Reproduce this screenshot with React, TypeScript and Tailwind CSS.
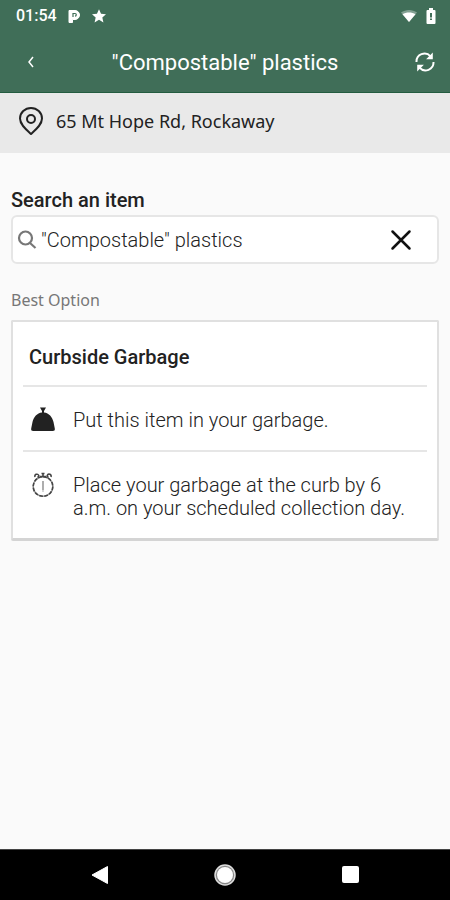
import React, { useState } from "react";

const steps = [
  { icon: "bag", text: "Put this item in your garbage." },
  {
    icon: "clock",
    text: "Place your garbage at the curb by 6 a.m. on your scheduled collection day.",
  },
];

function StatusBar() {
  return (
    <div className="flex h-8 items-center justify-between pl-4 pr-[13px] text-white">
      <div className="flex items-center">
        <span className="w-[52px] text-base font-medium">01:54</span>
        <svg className="h-4 w-3" viewBox="0 0 12 16">
          <path
            d="M1 2.500H7A4.500 4.500 0 0 1 7 11.500H4.500V14.500H1z"
            fill="currentColor"
            stroke="currentColor"
            strokeLinejoin="round"
          />
          <path d="M5 9V5.500h2a1.300 1.300 0 0 1 0 2.600" fill="none" stroke="#406e58" strokeWidth="1.200" />
        </svg>
        <svg className="ml-3 h-[14px] w-[14px]" viewBox="0 0 24 24" fill="currentColor">
          <path d="M12 .5l3.500 7.800 8.500.8-6.300 5.500 1.900 8.400L12 18.600l-7.600 4.400 1.900-8.400L0 9.100l8.500-.8z" />
        </svg>
      </div>
      <div className="flex items-center gap-2">
        <svg className="h-4 w-4" viewBox="0 0 16 16" fill="currentColor">
          <path d="M0 4.500C4.500 1 11.500 1 16 4.500L8 14z" opacity="0.35" />
          <path d="M1.500 6.200C5 3.800 11 3.800 14.500 6.200L8 14z" />
        </svg>
        <svg className="h-4 w-3" viewBox="0 0 12 16">
          <path
            d="M4 0h4v2h1.500a1 1 0 0 1 1 1v12a1 1 0 0 1-1 1h-7a1 1 0 0 1-1-1V3a1 1 0 0 1 1-1H4z"
            fill="currentColor"
          />
          <path d="M5 5h2v4.500H5zM5 10.500h2V12H5z" fill="#406e58" />
        </svg>
      </div>
    </div>
  );
}

function RefreshIcon() {
  return (
    <svg className="h-5 w-5" viewBox="0 0 20 20" fill="none">
      <path
        d="M1.500 10A8 8 0 0 1 15.500 4.300M18.500 10A8 8 0 0 1 4.500 15.700"
        stroke="currentColor"
        strokeWidth="2"
      />
      <path d="M17.800 0.500V7.200H11.100zM2.200 19.500V12.800H8.900z" fill="currentColor" />
    </svg>
  );
}

function BagIcon() {
  return (
    <svg className="h-7 w-7" viewBox="0 0 28 28" fill="#222">
      <path d="M11 1.500h6l-2 3.500v1.500c5 .5 8.300 4.500 9.500 9.500l1.300 6.500c.3 1.800-.5 2.500-2 2.500H4.200c-1.500 0-2.300-.7-2-2.500L3.500 16C4.700 11 8 7 13 6.500V5z" />
    </svg>
  );
}

function ClockIcon() {
  return (
    <svg className="h-7 w-7" viewBox="0 0 28 28" fill="none" stroke="#444">
      <circle cx="14" cy="15.500" r="9.800" stroke="#999" strokeWidth="1.400" />
      <circle cx="14" cy="15.500" r="9.800" strokeWidth="1.600" strokeDasharray="3.700 1.430" />
      <path d="M14 10v9" stroke="#777" strokeWidth="1.200" />
      <path d="M14 19v2" stroke="#bbb" strokeWidth="1.200" />
      <path
        d="M6 6a2 2 0 1 1 3.800-1.500c0 1-.5 1.500-1.300 2M22 6a2 2 0 1 0-3.800-1.500c0 1 .5 1.500 1.300 2M12.500 2.500h3M14 2.500v3M11 5.500h6"
        strokeWidth="1.600"
      />
    </svg>
  );
}

function NavBar() {
  return (
    <nav className="flex h-[51px] items-center justify-between border-t border-[#444] bg-black px-[88px] pb-px text-white">
      <button aria-label="Back" className="flex w-6 justify-center">
        <svg className="h-5 w-5" viewBox="0 0 20 20" fill="currentColor">
          <path d="M17.500 1.500v17L2 10z" stroke="currentColor" strokeLinejoin="round" />
        </svg>
      </button>
      <button aria-label="Home" className="flex w-6 justify-center">
        <svg className="h-[22px] w-[22px]" viewBox="0 0 22 22">
          <circle cx="11" cy="11" r="10" fill="#888" stroke="#ddd" strokeWidth="1.500" />
          <circle cx="11" cy="11" r="8" fill="#fff" />
        </svg>
      </button>
      <button aria-label="Recent apps" className="flex w-6 justify-center">
        <span className="h-[17px] w-[17px] rounded-xs bg-white" />
      </button>
    </nav>
  );
}

export default function App() {
  const [query, setQuery] = useState('"Compostable" plastics');

  return (
    <div className="flex min-h-screen flex-col bg-[#fafafa] font-[Roboto,sans-serif] text-[#222]">
      <header className="border-b border-[#235c40] bg-[#406e58] text-white">
        <StatusBar />
        <div className="flex h-[60px] items-center px-[15px]">
          <button aria-label="Go back" className="flex w-8 justify-center">
            <svg className="h-3 w-2" viewBox="0 0 8 12" fill="none">
              <path d="M6 1L2 6l4 5" stroke="currentColor" strokeWidth="1.500" />
            </svg>
          </button>
          <h1 className="flex-1 text-center text-[22px]">"Compostable" plastics</h1>
          <button aria-label="Refresh" className="flex w-8 justify-end">
            <RefreshIcon />
          </button>
        </div>
      </header>

      <div className="flex h-[60px] items-center gap-3 bg-[#e9e9e9] pb-1 pl-[18px] font-['Noto_Sans',sans-serif] text-lg">
        <svg className="h-7 w-[26px]" viewBox="0 0 26 28" fill="none" stroke="#222" strokeWidth="2">
          <path d="M13 27C8 22.500 2 17.500 2 11.500a11 10.500 0 0 1 22 0C24 17.500 18 22.500 13 27z" />
          <circle cx="13" cy="12" r="4" />
        </svg>
        <span>65 Mt Hope Rd, Rockaway</span>
      </div>

      <main className="flex-1 px-[11px] pt-[35px]">
        <label htmlFor="item" className="block text-xl font-medium leading-6">
          Search an item
        </label>
        <div className="mt-[3px] flex h-[49px] items-center rounded-md border-2 border-[#e6e6e6] bg-white pl-1 pr-6">
          <svg className="h-5 w-5" viewBox="0 0 20 20" fill="none" stroke="#777" strokeWidth="2.200">
            <circle cx="8.500" cy="8" r="6.500" />
            <path d="M13 13l5.500 5" />
          </svg>
          <input
            id="item"
            type="text"
            value={query}
            onChange={(e) => setQuery(e.target.value)}
            className="ml-1 min-w-0 flex-1 text-xl font-light outline-none"
          />
          <button aria-label="Clear search" onClick={() => setQuery("")}>
            <svg className="h-6 w-6" viewBox="0 0 24 24" fill="none" stroke="#111" strokeWidth="2.500" strokeLinecap="round">
              <path d="M3.500 3.500l17 17M20.500 3.500l-17 17" />
            </svg>
          </button>
        </div>

        <h2 className="mt-6 font-['Noto_Sans',sans-serif] text-base leading-6 text-[#777]">
          Best Option
        </h2>
        <section className="mt-2 rounded-xs border-2 border-b-3 border-[#e0e0e0] border-b-[#d4d4d4] bg-white px-2.5">
          <h3 className="flex h-[63px] items-center px-1.5 pt-1.5 text-xl font-medium">Curbside Garbage</h3>
          <ul>
            {steps.map((step) => (
              <li key={step.icon} className="flex gap-4 border-t-2 border-[#e6e6e6] px-1.5 pb-[18px] pt-[22px]">
                <span className="-mb-1 -mt-[3px] shrink-0">
                  {step.icon === "bag" ? <BagIcon /> : <ClockIcon />}
                </span>
                <p className="text-xl font-light leading-[23px]">{step.text}</p>
              </li>
            ))}
          </ul>
        </section>
      </main>

      <NavBar />
    </div>
  );
}
